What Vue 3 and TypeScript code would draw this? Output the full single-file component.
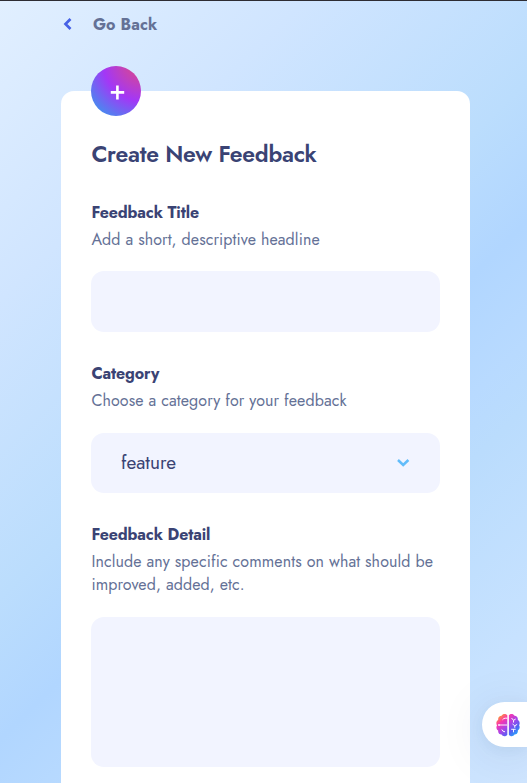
<script setup lang="ts">
import { ref } from 'vue'

const title = ref('')
const detail = ref('')
const category = ref('feature')
</script>

<template>
  <main class="page">
    <a class="back">
      <svg class="back-icon" width="9" height="12" viewBox="0 0 9 12"><path d="M7.5 1 2.500 6l5 5" fill="none" stroke="#4661e6" stroke-width="2.7" /></svg>
      <span class="back-text">Go Back</span>
    </a>
    <section class="card">
      <div class="badge">
        <svg width="50" height="50" viewBox="0 0 50 50"><path d="M26.4 19.5v14M19.8 26.4h13.4" stroke="#fff" stroke-width="2.6" /></svg>
      </div>
      <h1 class="heading">Create New Feedback</h1>
      <div class="field">
        <label class="label">Feedback Title</label>
        <p class="hint">Add a short, descriptive headline</p>
        <input v-model="title" class="control" type="text" />
      </div>
      <div class="field">
        <label class="label">Category</label>
        <p class="hint">Choose a category for your feedback</p>
        <button class="control select" type="button">
          <span class="value">{{ category }}</span>
          <svg width="14" height="10" viewBox="0 0 14 10"><path d="m2 2 5.2 5L12.4 2" fill="none" stroke="#62bcfa" stroke-width="2.5" /></svg>
        </button>
      </div>
      <div class="field">
        <label class="label">Feedback Detail</label>
        <p class="hint">Include any specific comments on what should be<br />improved, added, etc.</p>
        <textarea v-model="detail" class="control area"></textarea>
      </div>
    </section>
    <aside class="assistant">
      <svg width="24" height="24" viewBox="0 0 24 24">
        <defs>
          <linearGradient id="brain" x1="0.1" y1="0.05" x2="0.9" y2="0.95">
            <stop offset="0" stop-color="#ffa51f" />
            <stop offset="0.25" stop-color="#f936ae" />
            <stop offset="0.52" stop-color="#a845e8" />
            <stop offset="0.76" stop-color="#5461f4" />
            <stop offset="1" stop-color="#20b2fb" />
          </linearGradient>
        </defs>
        <path fill="url(#brain)" d="M11.3 2.3v19.4C10 23.7 6.7 23.7 5.6 21.5 3.3 21.5 1.8 19.7 2.2 17.4.3 16.3-.1 14.1 1 12.4-.2 10.3.3 8 2.2 7 1.8 4.6 3.4 2.9 5.6 2.8 6.6.4 9.9.3 11.3 2.3ZM12.9 2.3C14.2.3 17.5.4 18.5 2.8 20.7 2.9 22.2 4.6 21.8 7 23.7 8 24.2 10.3 23.1 12.3 24.2 14.1 23.7 16.3 21.8 17.4 22.2 19.7 20.7 21.5 18.5 21.5 17.3 23.7 14.2 23.7 12.9 21.7Z" />
        <path d="M11.3 5.2H9.3Q7.5 5.3 6.5 6.8M3.5 12h7.7M5.8 16.5Q6.5 18.7 9 18.8M15.5 5l2 2.3L19.7 6M17.5 7.3v2.2M16.5 11l2.3 1.8 2.4-1.5M18.8 12.8v2M15.2 16.3h4.5M17.5 16.3v3" fill="none" stroke="#fff" stroke-width="0.95" />
        <circle cx="3" cy="12" r="0.9" fill="#fff" />
      </svg>
    </aside>
  </main>
</template>

<style>
html,
body {
  margin: 0;
  overflow: hidden;
}
</style>

<style scoped>
* {
  box-sizing: border-box;
}
.page {
  position: relative;
  height: 783px;
  overflow: hidden;
  padding: 12px 57px 0 61px;
  border-top: 1px solid #2d2c33;
  font-family: Jost, Lato, sans-serif;
  background: linear-gradient(135.5deg, #e1efff 0%, #d0e5ff 23%, #bbddfd 46%, #b1d6ff 56.8%, #b8daff 66%, #badcfd 71%, #c7e2ff 88%, #cfe5ff 100%);
}
.back {
  display: flex;
  align-items: center;
  height: 22px;
  padding-left: 2px;
}
.back-text {
  margin-left: 21px;
  font-size: 16px;
  font-weight: 700;
  letter-spacing: 0.1px;
  color: #647196;
}
.card {
  position: relative;
  height: 760px;
  margin-top: 56px;
  padding: 47px 30px 0;
  border-radius: 13px;
  background: #fff;
}
.badge {
  position: absolute;
  top: -25px;
  left: 30px;
  width: 50px;
  height: 50px;
  border-radius: 50%;
  background: radial-gradient(circle at 104% -10%, #e84d70 0%, #a337f6 53%, #28a7ed 100%);
}
.heading {
  margin: 0 0 33px;
  padding-left: 0.4px;
  font-size: 23px;
  line-height: 32px;
  font-weight: 600;
  letter-spacing: -0.28px;
  color: #3a4374;
}
.field {
  margin-bottom: 32px;
}
.label {
  display: block;
  padding-left: 0.4px;
  font-size: 16px;
  line-height: 20px;
  font-weight: 700;
  letter-spacing: -0.1px;
  color: #3a4374;
}
.hint {
  margin: 5px 0 20px;
  padding-left: 0.4px;
  font-size: 16px;
  line-height: 23px;
  letter-spacing: 0.11px;
  white-space: nowrap;
  color: #647196;
}
.field + .field .hint {
  margin-bottom: 21px;
}
.control {
  display: block;
  width: 100%;
  height: 61px;
  padding: 0 30px;
  border: 0;
  border-radius: 13px;
  outline: none;
  background: #f2f4ff;
  font-family: inherit;
  font-size: 19px;
  color: #3a4374;
}
.select {
  display: flex;
  align-items: center;
  justify-content: space-between;
  height: 60px;
}
.value {
  padding-bottom: 2px;
}
.area {
  height: 150px;
  resize: none;
}
.assistant {
  position: absolute;
  top: 701px;
  right: 0;
  display: flex;
  align-items: center;
  width: 45px;
  height: 45px;
  padding-left: 13.5px;
  border-radius: 23px 0 0 23px;
  background: #fff;
  box-shadow: 0 6px 50px rgba(30, 50, 80, 0.11), 0 3px 14px rgba(30, 60, 110, 0.06);
}
</style>
